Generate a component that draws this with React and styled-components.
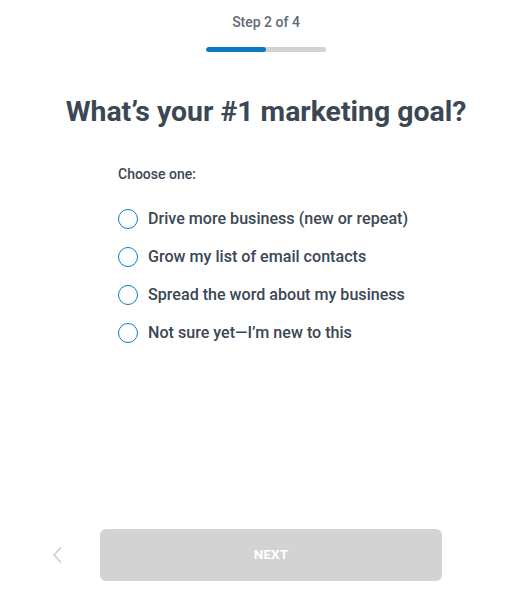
import React, { useState } from "react";
import styled, { createGlobalStyle } from "styled-components";

const GlobalStyle = createGlobalStyle`
  html, body {
    margin: 0;
    padding: 0;
    background: #ffffff;
  }
  body {
    font-family: Roboto, "Liberation Sans", Arial, sans-serif;
    color: #3b4754;
  }
`;

const Page = styled.div`
  width: 529px;
  height: 594px;
  box-sizing: border-box;
  padding: 12px 0 0 3px;
  display: flex;
  flex-direction: column;
  align-items: center;
`;

const StepLabel = styled.div`
  font-size: 14px;
  font-weight: 500;
  color: #5f6a77;
  line-height: 20px;
`;

const Track = styled.div`
  width: 120px;
  height: 5px;
  margin-top: 15px;
  border-radius: 3px;
  background: #d2d2d2;
  overflow: hidden;
`;

const Fill = styled.div`
  height: 100%;
  background: #0a7bc1;
  border-radius: 3px;
`;

const Heading = styled.h1`
  margin: 42px 0 0;
  font-size: 28.4px;
  font-weight: 700;
  line-height: 36px;
  color: #3b4754;
`;

const Question = styled.fieldset`
  border: 0;
  margin: 35px 0 0;
  padding: 0 0 0 115px;
  align-self: flex-start;
  display: flex;
  flex-direction: column;
`;

const Legend = styled.legend`
  padding: 0;
  font-size: 14px;
  font-weight: 500;
  line-height: 18px;
  color: #3b4754;
`;

const Options = styled.div`
  margin-top: 26px;
  display: flex;
  flex-direction: column;
  gap: 18px;
`;

const Option = styled.label`
  display: flex;
  align-items: center;
  gap: 10px;
  font-size: 16.1px;
  font-weight: 500;
  line-height: 20px;
  color: #3b4754;
  cursor: pointer;
`;

const Radio = styled.span`
  width: 20px;
  height: 20px;
  box-sizing: border-box;
  border-radius: 50%;
  border: 1.5px solid #0a7bc1;
  flex-shrink: 0;
  display: flex;
  align-items: center;
  justify-content: center;

  &::after {
    content: "";
    width: 10px;
    height: 10px;
    border-radius: 50%;
    background: #0a7bc1;
    display: ${(p) => (p.$checked ? "block" : "none")};
  }
`;

const Footer = styled.div`
  margin-top: auto;
  margin-bottom: 13px;
  align-self: stretch;
  display: flex;
  align-items: center;
  padding-left: 46px;
`;

const BackButton = styled.button`
  width: 16px;
  height: 20px;
  padding: 0;
  border: 0;
  background: none;
  display: flex;
  align-items: center;
  justify-content: center;
  cursor: pointer;
`;

const NextButton = styled.button`
  margin-left: 35px;
  width: 342px;
  height: 52px;
  padding: 0 0 2px;
  border: 0;
  border-radius: 6px;
  background: #d3d3d3;
  color: #ffffff;
  font-family: Roboto, "Liberation Sans", Arial, sans-serif;
  font-size: 13.5px;
  font-weight: 700;
  letter-spacing: 0.1px;
  cursor: default;
`;

const goals = [
  "Drive more business (new or repeat)",
  "Grow my list of email contacts",
  "Spread the word about my business",
  "Not sure yet\u2014I\u2019m new to this",
];

export default function App() {
  const [picked, setPicked] = useState(null);

  return (
    <>
      <GlobalStyle />
      <Page>
        <StepLabel>Step 2 of 4</StepLabel>
        <Track>
          <Fill style={{ width: `${(2 / 4) * 100}%` }} />
        </Track>

        <Heading>What’s your #1 marketing goal?</Heading>

        <Question>
          <Legend>Choose one:</Legend>
          <Options>
            {goals.map((g, i) => (
              <Option key={g} onClick={() => setPicked(i)}>
                <Radio $checked={picked === i} />
                {g}
              </Option>
            ))}
          </Options>
        </Question>

        <Footer>
          <BackButton aria-label="Back">
            <svg width="12" height="18" viewBox="0 0 12 18" fill="none">
              <path
                d="M9.5 2L3 9l6.5 7"
                stroke="#cfcfcf"
                strokeWidth="1.8"
                strokeLinecap="round"
                strokeLinejoin="round"
              />
            </svg>
          </BackButton>
          <NextButton disabled={picked === null}>NEXT</NextButton>
        </Footer>
      </Page>
    </>
  );
}
